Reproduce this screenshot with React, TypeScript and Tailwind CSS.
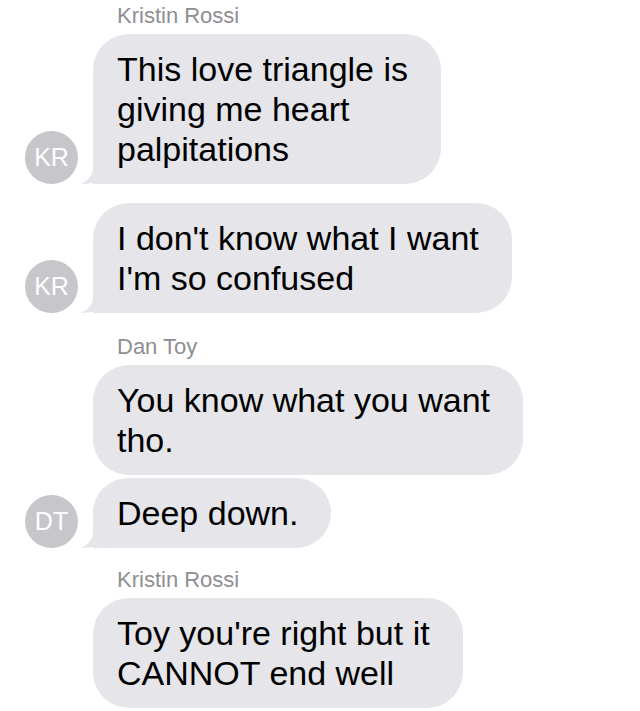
import React from "react";

const FONT = { fontFamily: '"Liberation Sans", Arial, sans-serif' };

function Tail() {
  return (
    <svg
      className="absolute bottom-0 left-[-12px]"
      width="32"
      height="24"
      viewBox="0 0 32 24"
    >
      <path
        d="M12 0 L12 8 C12 15 8 20 0 23.6 C7 24.4 14 23 19 20 C22 22.5 26 24 32 24 L32 0 Z"
        fill="#e5e5ea"
      />
    </svg>
  );
}

function Avatar({ initials }: { initials: string }) {
  return (
    <div className="flex h-[53px] w-[53px] items-center justify-center rounded-full bg-[#c6c6cb] text-[25px] leading-none text-white">
      {initials}
    </div>
  );
}

function Bubble({
  lines,
  tail,
}: {
  lines: string[];
  tail?: boolean;
}) {
  return (
    <div
      className={
        "relative whitespace-nowrap bg-[#e5e5ea] pl-[24px] pr-[33px] py-[15px] text-[34px] leading-[40px] text-black rounded-[36px] " +
        (tail ? "rounded-bl-[0px]" : "")
      }
    >
      {tail && <Tail />}
      <span className="relative">
        {lines.map((l, i) => (
          <React.Fragment key={i}>
            {i > 0 && <br />}
            {l}
          </React.Fragment>
        ))}
      </span>
    </div>
  );
}

function Row({
  lines,
  avatar,
  className = "",
}: {
  lines: string[];
  avatar?: string;
  className?: string;
}) {
  return (
    <div className={"flex items-end " + className}>
      <div className="ml-[25px] mr-[15px] flex w-[53px] shrink-0 items-end">
        {avatar && <Avatar initials={avatar} />}
      </div>
      <Bubble lines={lines} tail={!!avatar} />
    </div>
  );
}

function Name({ children, className = "" }: { children: string; className?: string }) {
  return (
    <div className={"pl-[117px] text-[22px] leading-[26px] text-[#8e8e93] " + className}>
      {children}
    </div>
  );
}

export default function App() {
  return (
    <div
      className="flex h-[711px] w-[640px] flex-col overflow-hidden bg-white"
      style={FONT}
    >
      <Name className="mt-[3px]">Kristin Rossi</Name>
      <Row
        className="mt-[5px]"
        avatar="KR"
        lines={["This love triangle is", "giving me heart", "palpitations"]}
      />
      <Row
        className="mt-[19px]"
        avatar="KR"
        lines={["I don't know what I want", "I'm so confused"]}
      />
      <Name className="mt-[21px]">Dan Toy</Name>
      <Row className="mt-[5px]" lines={["You know what you want", "tho."]} />
      <Row className="mt-[3px]" avatar="DT" lines={["Deep down."]} />
      <Name className="mt-[19px]">Kristin Rossi</Name>
      <Row
        className="mt-[5px]"
        lines={["Toy you're right but it", "CANNOT end well"]}
      />
    </div>
  );
}
